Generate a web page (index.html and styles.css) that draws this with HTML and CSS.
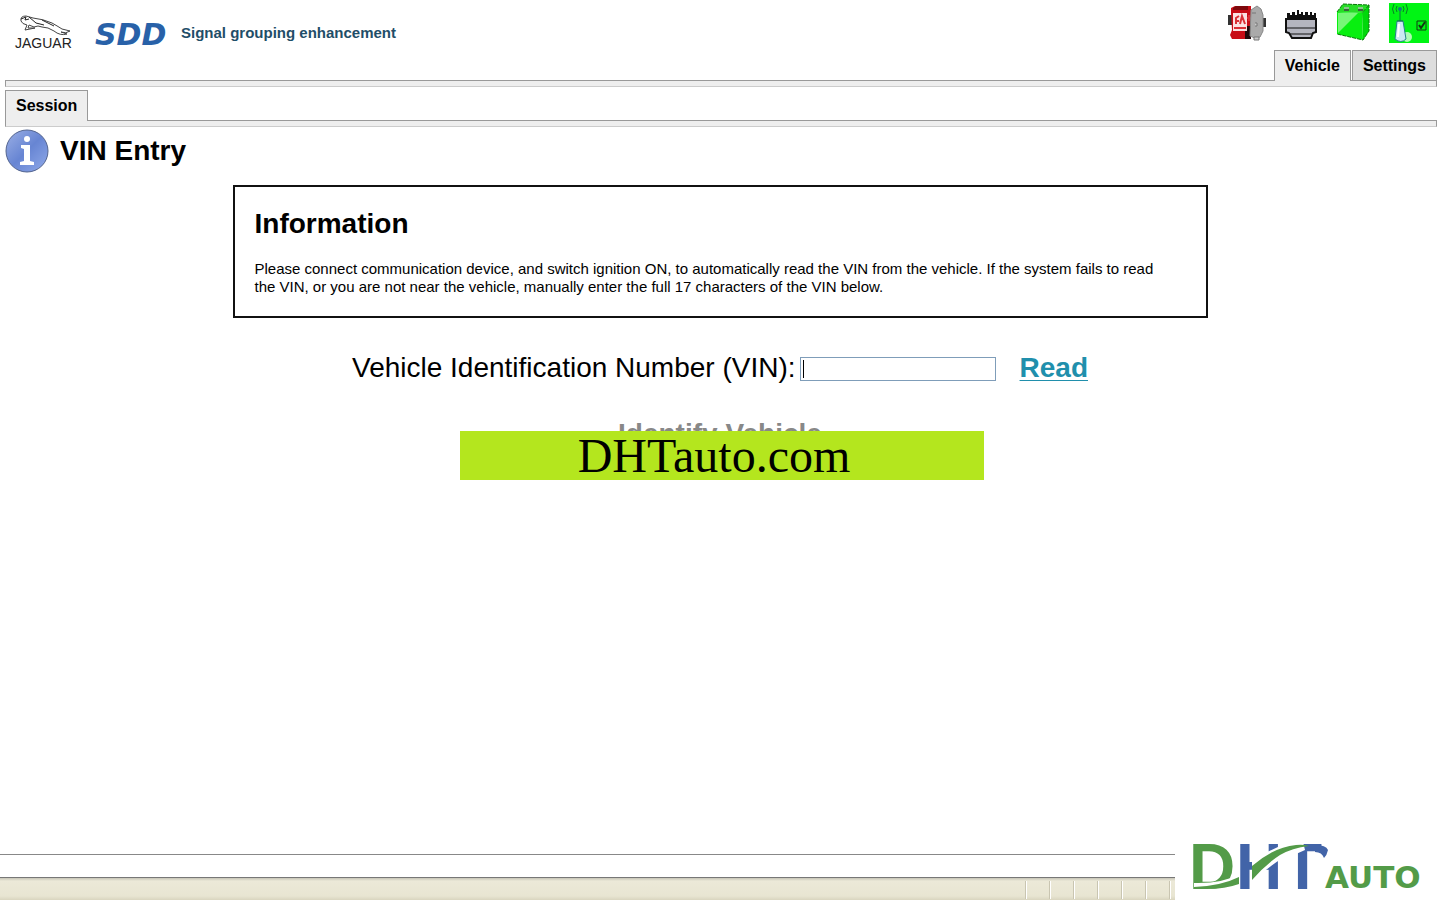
FILE: index.html
```html
<!DOCTYPE html>
<html lang="en">
<head>
<meta charset="UTF-8">
<meta name="viewport" content="width=device-width, initial-scale=1.0">
<title>VIN Entry</title>
<link rel="stylesheet" href="styles.css">
</head>
<body>

<header class="header">
  <div class="brand">
    <svg class="jaguar" width="68" height="36" viewBox="0 0 68 36" role="img" aria-label="Jaguar">
      <path d="M10 8 Q9 3 15 3 L22 5 Q32 6 41 10 Q48 14 51 16 L59 18 Q55 21 50 19 L56 21 Q49 23 43 18 Q37 14 31 14 L27 13 L23 14 L18 12 L17 15 L24 15 L14 17 L16 12 Q11 11 10 8 Z" fill="#fff" stroke="#444" stroke-width="1"/>
      <path d="M10 6 L15 4 L14 7 L18 6 M18 4 L25 10 M25 10 L33 12 M31 7 L43 13" fill="none" stroke="#222" stroke-width="1"/>
      <text x="4" y="35" class="jaguar-name">JAGUAR</text>
    </svg>
    <svg class="sdd" width="76" height="40" viewBox="0 0 76 40" role="img" aria-label="SDD">
      <text x="2" y="31" class="sdd-name">SDD</text>
    </svg>
    <span class="release">Signal grouping enhancement</span>
  </div>

  <div class="tools">
    <div class="status-icons">
      <svg width="38" height="40" viewBox="0 0 38 40">
        <path d="M0 12h4v10H0zM34 15h4v9h-4z" fill="#333"/>
        <path d="M3 5 L7 3 H23 V36 H4 L2 32 L4 27 L3 10 Z" fill="#c80d16"/>
        <path d="M5 5 L8 3 H20 V7 H5 Z" fill="#7d080c"/>
        <path d="M17 23h6v13h-6z" fill="#20080a"/>
        <path d="M5 10h14v18H5z" fill="#fbe3e3"/>
        <path d="M6 25h12M8 21V15l3-2M8 18h3M12 21l2-8 3 8M21 12v6M19 15h4" fill="none" stroke="#d93036" stroke-width="2"/>
        <path d="M23 7 L29 3 L33 6 L35 12 V28 L32 34 L27 35 L22 33 Z" fill="#aaa" stroke="#888"/>
        <path d="M24 10h4M27 20h2v3h-2M26 34h5v3h-5z" fill="#ccc" stroke="#777"/>
      </svg>
      <svg width="32" height="40" viewBox="0 0 32 40">
        <path d="M2 16V10h3v2h2V9h3v3h2V7h2v4h2V9h2v3h2V9h3v3h2V9h2v3h2v-2h2v6z" fill="#111"/>
        <path d="M1 16H31V29L28 30 L26 35H7L4 30 L1 29Z" fill="#b4b5bf" stroke="#111" stroke-width="2"/>
        <path d="M2 25H30M4 31H28" stroke="#111" stroke-width="1"/>
      </svg>
      <svg width="34" height="40" viewBox="0 0 34 40">
        <path d="M7 1 L33 2 L26 10 L1 9 Z" fill="#28dc28"/>
        <path d="M1 9 L26 10 L27 37 L1 31Z" fill="#08ef10"/>
        <path d="M26 10 L33 2 V28 L27 37Z" fill="#00d80a"/>
        <path d="M2 10 H22 L2 30Z" fill="#77f777"/>
        <path d="M1 9 L7 1 L33 2 V28 L27 37 L1 31 M33 2 L26 10" fill="none" stroke="#087808" stroke-dasharray="4 1"/>
        <path d="M8 4h5v3H8zM22 4h5v3h-5z" fill="#8cc48d"/>
        <path d="M8 7h5M22 7h5" stroke="#3a663b" stroke-width="2"/>
      </svg>
      <svg width="40" height="40" viewBox="0 0 40 40">
        <path d="M0 0H40V40H0Z" fill="#00f514"/>
        <circle cx="18" cy="34" r="5" fill="#aefbb4"/>
        <path d="M8 18 H14 L17 36 Q12 41 6 36Z" fill="#cce9f3" stroke="#258389"/>
        <path d="M10 21 L9 34" stroke="#fff" stroke-width="2"/>
        <path d="M11 18V6M8 18h6" stroke="#126e47" stroke-width="1"/>
        <circle cx="11" cy="6" r="2" fill="#147a80"/>
        <path d="M8 3Q6 6 8 9M5 1Q2 6 5 11M14 3Q16 6 14 9M17 1Q20 6 17 11" fill="none" stroke="#087f26"/>
        <path d="M28 18H37V27H28Z" fill="none" stroke="#123812" stroke-width="1"/>
        <path d="M30 22L32 25L36 19" fill="none" stroke="#123812" stroke-width="2"/>
      </svg>
    </div>
    <nav class="tabs">
      <button type="button" class="tab active">Vehicle</button>
      <button type="button" class="tab">Settings</button>
    </nav>
  </div>
</header>
<div class="tab-bar"></div>

<nav class="tabs sub-tabs">
  <button type="button" class="tab active">Session</button>
</nav>
<div class="tab-bar"></div>

<main class="content">
  <div class="page-title">
    <svg width="44" height="44" viewBox="0 0 44 44">
      <defs>
        <linearGradient id="info-fill" x1="0" y1="0" x2="1" y2="1">
          <stop offset="0" stop-color="#9cb0e5"/>
          <stop offset=".5" stop-color="#6785d3"/>
          <stop offset="1" stop-color="#91abea"/>
        </linearGradient>
      </defs>
      <circle cx="22" cy="22" r="21" fill="url(#info-fill)" stroke="#53648f" stroke-width="1"/>
      <circle cx="22" cy="10" r="3" fill="#fff"/>
      <path d="M16 16H25V32L29 33V36H15V33L19 32V20L16 19Z" fill="#fff"/>
    </svg>
    <h1>VIN Entry</h1>
  </div>

  <section class="info-box">
    <h2>Information</h2>
    <p>Please connect communication device, and switch ignition ON, to automatically read the VIN from the vehicle. If the system fails to read the VIN, or you are not near the vehicle, manually enter the full 17 characters of the VIN below.</p>
  </section>

  <form class="vin-form">
    <div class="vin-row">
      <label for="vin">Vehicle Identification Number (VIN):</label>
      <input type="text" id="vin" maxlength="17">
      <a href="#" class="read">Read</a>
    </div>
    <div class="identify">
      <button type="submit" disabled>Identify Vehicle</button>
      <div class="banner">DHTauto.com</div>
    </div>
  </form>
</main>

<footer class="footer">
  <div class="bottom-bars">
    <div class="status-bar"></div>
    <div class="taskbar">
      <span></span><span></span><span></span><span></span><span></span><span></span><span></span>
    </div>
  </div>
  <svg class="dht" width="265" height="70" viewBox="0 0 265 70" role="img" aria-label="DHT Auto">
    <text x="14" y="59" class="dht-green">D</text>
    <text x="61" y="59" class="dht-blue">H</text>
    <text x="108" y="59" class="dht-blue">T</text>
    <!-- gap between the letters and the swoosh -->
    <path d="M77 29 L77 52 Q94 36 108 28 L121 24 L130 20 L128 12 L108 12 L105 16 Z" fill="#fff"/>
    <path d="M19 53 Q46 54 65 44 V50 Q52 57 32 59 H19Z" fill="#fff"/>
    <!-- swoosh in two parts, behind and in front of the H -->
    <path d="M19 57 Q46 56 64 47 V54 Q50 59 32 59 H19Z" fill="#539b48"/>
    <path d="M77 36 Q99 17 121 15 Q128 14 134 16 Q117 18 105 25 Q91 34 77 50Z" fill="#539b48"/>
    <path d="M140 15 Q151 15 153 20 Q152 25 149 28 Q147 22 140 22Z" fill="#4264a8"/>
    <text x="150" y="58" class="dht-auto">AUTO</text>
  </svg>
</footer>

</body>
</html>
```

FILE: styles.css
```css
* {
  box-sizing: border-box;
}

body {
  display: flex;
  flex-direction: column;
  min-height: 100vh;
  margin: 0;
  background: #fff;
  color: #000;
  font-family: "Liberation Sans", Arial, sans-serif;
  font-size: 16px;
}

svg {
  display: block;
  flex: none;
  overflow: visible;
}

h1,
h2,
p {
  margin: 0;
}

.header {
  display: flex;
  justify-content: space-between;
  margin: 0 3px 0 5px;
}

.brand {
  display: flex;
  align-items: center;
  height: 64px;
  padding-left: 6px;
}

.jaguar {
  margin-top: -2px;
}

.sdd {
  margin: 4px 12px 0 14px;
}

.jaguar-name {
  font-family: "Liberation Sans", Arial, sans-serif;
  font-size: 14px;
  fill: #222;
}

.sdd-name {
  font-family: "DejaVu Sans", sans-serif;
  font-size: 30px;
  font-weight: bold;
  font-style: italic;
  fill: #2861a8;
}

.release {
  color: #1f4e68;
  font-size: 15px;
  font-weight: bold;
}

.tools {
  display: flex;
  flex-direction: column;
  align-items: flex-end;
}

.status-icons {
  display: flex;
  gap: 19px;
  height: 50px;
  padding: 3px 8px 0 0;
}

.tabs {
  display: flex;
  gap: 1px;
}

.tab {
  height: 30px;
  padding: 0 10px;
  border: 1px solid #999;
  border-bottom: 0;
  background: #ddd;
  color: #000;
  font-family: inherit;
  font-size: 16px;
  font-weight: bold;
}

.tab.active {
  height: 31px;
  margin-bottom: -1px;
  background: #eee;
  position: relative;
}

.sub-tabs {
  margin: 3px 3px 0 5px;
}

.tab-bar {
  height: 7px;
  margin: 0 3px 0 5px;
  border: 1px solid #999;
  border-bottom-color: #ccc;
  background: #eee;
}

.content {
  flex: 1;
  padding: 2px 5px;
}

.page-title {
  display: flex;
  align-items: center;
  gap: 11px;
}

h1,
h2 {
  font-size: 28px;
  line-height: 34px;
}

.info-box {
  width: 975px;
  max-width: 100%;
  margin: 12px auto 0;
  padding: 20px 32px 20px 20px;
  border: 2px solid #111;
}

.info-box p {
  margin-top: 19px;
  font-size: 15px;
  line-height: 18px;
}

.vin-form {
  margin-top: 34px;
  font-size: 28px;
  line-height: 32px;
}

.vin-row {
  display: flex;
  align-items: center;
  justify-content: center;
}

.vin-row input {
  width: 196px;
  height: 24px;
  margin: 2px 24px 0 4px;
  padding: 1px 3px;
  border: 1px solid #7f9db9;
  font-size: 16px;
  background: linear-gradient(#000, #000) 2px 2px / 1px 18px no-repeat;
}

.read {
  color: #208fac;
  font-weight: bold;
  text-decoration-thickness: 1px;
  text-underline-offset: 3px;
}

.identify {
  position: relative;
  width: 524px;
  max-width: 100%;
  margin: 34px auto 0;
  text-align: center;
}

.identify button {
  padding: 0;
  border: 0;
  background: none;
  color: #888;
  font-family: inherit;
  font-size: 28px;
  font-weight: bold;
  line-height: 32px;
}

.banner {
  position: absolute;
  top: 13px;
  left: 2px;
  width: 100%;
  height: 49px;
  padding-right: 16px;
  background: #b4e61e;
  font-family: "Liberation Serif", "Times New Roman", serif;
  font-size: 48px;
  line-height: 50px;
}

.footer {
  display: flex;
  align-items: flex-end;
}

.bottom-bars {
  flex: 1;
}

.status-bar {
  height: 23px;
  border-top: 1px solid #888;
}

.taskbar {
  display: flex;
  justify-content: flex-end;
  height: 23px;
  padding: 3px 0 1px;
  border-top: 1px solid #777;
  background: linear-gradient(#c7c5b7, #ece9d8 3px, #e8e5d2 18px, #d9d5bf);
}

.taskbar span {
  width: 24px;
  border-left: 1px solid #c9c5b1;
  box-shadow: inset 1px 0 #fff;
}

.taskbar span:last-child {
  width: 6px;
}

.dht-green,
.dht-blue {
  font-family: "Liberation Sans", Arial, sans-serif;
  font-size: 64px;
  font-weight: bold;
}

.dht-green {
  fill: #539b48;
}

.dht-blue {
  fill: #4264a8;
}

.dht-auto {
  font-family: "DejaVu Sans", sans-serif;
  font-size: 31px;
  font-weight: bold;
  fill: #539b48;
}
```
